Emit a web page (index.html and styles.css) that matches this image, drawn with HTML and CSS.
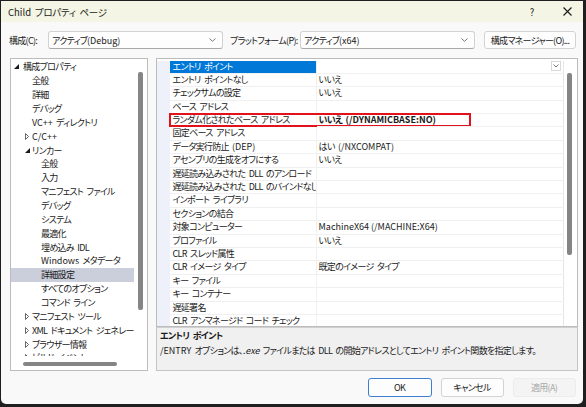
FILE: index.html
```html
<!DOCTYPE html>
<html lang="ja">
<head>
<meta charset="utf-8">
<title>Child プロパティ ページ</title>
<link rel="stylesheet" href="styles.css">
</head>
<body>
<div class="window">
  <div class="titlebar">
    <span class="title"><span class="lat">Child</span> プロパティ ページ</span>
    <span class="help">?</span>
    <span class="close"><svg width="9" height="9" viewBox="0 0 9 9"><path d="M0.5 0.5L8.5 8.5M8.5 0.5L0.5 8.5" stroke="#1a1a1a" stroke-width="1.1" fill="none"/></svg></span>
  </div>

  <div class="toolbar">
    <span class="lbl lbl1">構成(C):</span>
    <div class="combo"><span>アクティブ<span class="lat">(Debug)</span></span><svg class="chev" width="7" height="4" viewBox="0 0 7 4"><path d="M0.5 0.5L3.5 3.3L6.5 0.5" stroke="#777" fill="none"/></svg></div>
    <span class="lbl lbl2">プラットフォーム(P):</span>
    <div class="combo"><span>アクティブ<span class="lat">(x64)</span></span><svg class="chev" width="7" height="4" viewBox="0 0 7 4"><path d="M0.5 0.5L3.5 3.3L6.5 0.5" stroke="#777" fill="none"/></svg></div>
    <button class="btn mgr">構成マネージャー(O)...</button>
  </div>

  <div class="main">
    <div class="tree-panel">
      <div class="tree">
        <div class="item l0"><span class="tg"><svg width="5" height="5" viewBox="0 0 5 5"><polygon points="5,0 5,5 0,5" fill="#1a1a1a"/></svg></span>構成プロパティ</div>
        <div class="item l1"><span class="tg"></span>全般</div>
        <div class="item l1"><span class="tg"></span>詳細</div>
        <div class="item l1"><span class="tg"></span>デバッグ</div>
        <div class="item l1"><span class="tg"></span><span class="lat">VC++</span>&nbsp;ディレクトリ</div>
        <div class="item l1"><span class="tg"><svg class="col" width="4" height="7" viewBox="0 0 4 7"><polygon points="0.5,0.5 3.5,3.5 0.5,6.5" fill="none" stroke="#555" stroke-width="0.9"/></svg></span><span class="lat">C/C++</span></div>
        <div class="item l1"><span class="tg"><svg class="exp" width="5" height="5" viewBox="0 0 5 5"><polygon points="5,0 5,5 0,5" fill="#1a1a1a"/></svg></span>リンカー</div>
        <div class="item l2"><span class="tg"></span>全般</div>
        <div class="item l2"><span class="tg"></span>入力</div>
        <div class="item l2"><span class="tg"></span>マニフェスト ファイル</div>
        <div class="item l2"><span class="tg"></span>デバッグ</div>
        <div class="item l2"><span class="tg"></span>システム</div>
        <div class="item l2"><span class="tg"></span>最適化</div>
        <div class="item l2"><span class="tg"></span>埋め込み IDL</div>
        <div class="item l2"><span class="tg"></span><span class="lat">Windows</span>&nbsp;メタデータ</div>
        <div class="item l2 sel"><span class="tg"></span>詳細設定</div>
        <div class="item l2"><span class="tg"></span>すべてのオプション</div>
        <div class="item l2"><span class="tg"></span>コマンド ライン</div>
        <div class="item l1"><span class="tg"><svg class="col" width="4" height="7" viewBox="0 0 4 7"><polygon points="0.5,0.5 3.5,3.5 0.5,6.5" fill="none" stroke="#555" stroke-width="0.9"/></svg></span>マニフェスト ツール</div>
        <div class="item l1"><span class="tg"><svg class="col" width="4" height="7" viewBox="0 0 4 7"><polygon points="0.5,0.5 3.5,3.5 0.5,6.5" fill="none" stroke="#555" stroke-width="0.9"/></svg></span>XML ドキュメント ジェネレーター</div>
        <div class="item l1"><span class="tg"><svg class="col" width="4" height="7" viewBox="0 0 4 7"><polygon points="0.5,0.5 3.5,3.5 0.5,6.5" fill="none" stroke="#555" stroke-width="0.9"/></svg></span>ブラウザー情報</div>
        <div class="item l1"><span class="tg"><svg class="col" width="4" height="7" viewBox="0 0 4 7"><polygon points="0.5,0.5 3.5,3.5 0.5,6.5" fill="none" stroke="#555" stroke-width="0.9"/></svg></span>ビルド イベント</div>
      </div>
      <div class="vthumb"></div>
      <div class="hthumb"></div>
    </div>

    <div class="right">
      <div class="grid">
        <div class="rows">
          <div class="row"><span class="gut"></span><span class="name selcell">エントリ ポイント</span><span class="val"><span class="ddbtn"><svg width="6" height="4" viewBox="0 0 6 4"><path d="M0.5 0.5L3 3L5.5 0.5" stroke="#777" fill="none"/></svg></span></span></div>
          <div class="row"><span class="gut"></span><span class="name">エントリ ポイントなし</span><span class="val">いいえ</span></div>
          <div class="row"><span class="gut"></span><span class="name">チェックサムの設定</span><span class="val">いいえ</span></div>
          <div class="row"><span class="gut"></span><span class="name">ベース アドレス</span><span class="val"></span></div>
          <div class="row"><span class="gut"></span><span class="name hl">ランダム化されたベース アドレス<span class="redbox"></span></span><span class="val bold">いいえ <span class="lat">(/DYNAMICBASE:NO)</span></span></div>
          <div class="row"><span class="gut"></span><span class="name">固定ベース アドレス</span><span class="val"></span></div>
          <div class="row"><span class="gut"></span><span class="name">データ実行防止 <span class="lat">(DEP)</span></span><span class="val">はい <span class="lat">(/NXCOMPAT)</span></span></div>
          <div class="row"><span class="gut"></span><span class="name">アセンブリの生成をオフにする</span><span class="val">いいえ</span></div>
          <div class="row"><span class="gut"></span><span class="name">遅延読み込みされた DLL のアンロード</span><span class="val"></span></div>
          <div class="row"><span class="gut"></span><span class="name">遅延読み込みされた DLL のバインドなし</span><span class="val"></span></div>
          <div class="row"><span class="gut"></span><span class="name">インポート ライブラリ</span><span class="val"></span></div>
          <div class="row"><span class="gut"></span><span class="name">セクションの結合</span><span class="val"></span></div>
          <div class="row"><span class="gut"></span><span class="name">対象コンピューター</span><span class="val lat">MachineX64 (/MACHINE:X64)</span></div>
          <div class="row"><span class="gut"></span><span class="name">プロファイル</span><span class="val">いいえ</span></div>
          <div class="row"><span class="gut"></span><span class="name">CLR スレッド属性</span><span class="val"></span></div>
          <div class="row"><span class="gut"></span><span class="name">CLR イメージ タイプ</span><span class="val">既定のイメージ タイプ</span></div>
          <div class="row"><span class="gut"></span><span class="name">キー ファイル</span><span class="val"></span></div>
          <div class="row"><span class="gut"></span><span class="name">キー コンテナー</span><span class="val"></span></div>
          <div class="row"><span class="gut"></span><span class="name">遅延署名</span><span class="val"></span></div>
          <div class="row"><span class="gut"></span><span class="name">CLR アンマネージド コード チェック</span><span class="val"></span></div>
        </div>
        <div class="gthumb"></div>
      </div>
      <div class="desc">
        <div class="dtitle">エントリ ポイント</div>
        <div class="dtext"><span class="lat">/ENTRY</span> オプションは、<i class="lat">.exe</i> ファイルまたは DLL の開始アドレスとしてエントリ ポイント関数を指定します。</div>
      </div>
    </div>
  </div>

  <div class="footer">
    <button class="btn ok">OK</button>
    <button class="btn cancel">キャンセル</button>
    <button class="btn apply" disabled>適用(A)</button>
  </div>
</div>
</body>
</html>
```

FILE: styles.css
```css
* { box-sizing: border-box; }
html, body { margin: 0; padding: 0; }
body {
  width: 586px;
  height: 407px;
  overflow: hidden;
  background: #1f1f1f;
  font-family: "Noto Sans CJK JP", "Noto Sans", sans-serif;
  font-size: 9px;
  color: #1a1a1a;
  letter-spacing: -0.7px;
  word-spacing: 2px;
  font-feature-settings: "palt" 1;
}
.lat { letter-spacing: 0; word-spacing: 0; }
.window {
  margin: 1px 0 0 1px;
  width: 582px;
  height: 403px;
  background: #f9f9f9;
  border-radius: 0 0 5px 5px;
  display: flex;
  flex-direction: column;
  overflow: hidden;
}
.titlebar {
  flex: none;
  height: 21px;
  background: #f4f5e4;
  display: flex;
  align-items: center;
  padding-left: 7px;
}
.title { flex: 1; font-size: 9.5px; letter-spacing: -0.3px; }
.help { width: 12px; text-align: center; margin-right: 23px; font-size: 9.5px; letter-spacing: 0; }
.close { width: 12px; margin-right: 10px; display: flex; justify-content: center; }

.toolbar {
  flex: none;
  margin-top: 9px;
  height: 18px;
  display: flex;
  align-items: center;
  padding-left: 8px;
}
.lbl { white-space: nowrap; }
.lbl1 { width: 39px; }
.lbl2 { width: 70px; margin-left: 7px; }
.combo {
  width: 175px;
  height: 18px;
  border: 1px solid #d2d2d2;
  border-bottom-color: #a9a9a9;
  border-radius: 3px;
  background: #fefefe;
  display: flex;
  align-items: center;
  justify-content: space-between;
  padding: 0 6px 0 3px;
}
.btn {
  font-family: inherit;
  font-size: 9px;
  letter-spacing: inherit;
  word-spacing: inherit;
  color: #1a1a1a;
  border: 1px solid #d3d3d3;
  border-radius: 3px;
  background: #fdfdfd;
  padding: 0;
  height: 19px;
  font-feature-settings: "palt" 1;
}
.mgr { width: 92px; height: 18px; margin-left: 9px; }

.main {
  flex: none;
  margin-top: 9px;
  height: 313px;
  display: flex;
  padding-left: 9px;
  gap: 8px;
}
.tree-panel {
  width: 138px;
  height: 313px;
  border: 1px solid #bcbcbc;
  background: #fff;
  position: relative;
}
.tree {
  width: 123px;
  height: 297px;
  overflow: hidden;
  padding-top: 1px;
}
.item {
  height: 13.87px;
  display: flex;
  align-items: center;
  white-space: nowrap;
}
.item.l0 { padding-left: 3px; }
.item.l1 { padding-left: 12px; }
.item.l2 { padding-left: 21px; }
.item.sel { background: #cbcedb; }
.tg { flex: none; width: 9px; display: flex; align-items: center; }
.tg .col, .tg .exp { margin-left: 2px; }
.vthumb {
  position: absolute;
  left: 127px;
  top: 13px;
  width: 5px;
  height: 238px;
  background: #858585;
  border-radius: 2px;
}
.hthumb {
  position: absolute;
  left: 12px;
  top: 303px;
  width: 94px;
  height: 4px;
  background: #858585;
  border-radius: 2px;
}

.right {
  width: 422px;
  height: 313px;
  display: flex;
  flex-direction: column;
}
.grid {
  height: 269px;
  border: 1px solid #bcbcbc;
  background: #fff;
  position: relative;
  overflow: hidden;
}
.rows { width: 407px; padding-top: 1.5px; }
.row {
  display: grid;
  grid-template-columns: 13px 147px 247px;
  height: 13.4px;
}
.gut { background: #eef1f9; }
.name, .val {
  line-height: 12.4px;
  border-bottom: 1px solid #f0f0f0;
  white-space: nowrap;
  overflow: hidden;
}
.name { padding-left: 2.5px; border-right: 1px solid #f0f0f0; }
.name.hl { overflow: visible; position: relative; }
.val { padding-left: 1.5px; border-right: 1px solid #e6e6e6; position: relative; }
.bold { font-weight: bold; }
.selcell { background: #0078d7; color: #fff; }
.redbox {
  position: absolute;
  left: -1px;
  top: -1px;
  width: 302px;
  height: 14px;
  border: 2px solid #e3111d;
}
.ddbtn {
  position: absolute;
  right: 2px;
  top: 0.5px;
  width: 10px;
  height: 10px;
  border: 1px solid #d9d9d9;
  background: #fff;
  display: flex;
  align-items: center;
  justify-content: center;
}
.gthumb {
  position: absolute;
  left: 410px;
  top: 14px;
  width: 5px;
  height: 182px;
  background: #858585;
  border-radius: 2px;
}
.desc {
  height: 44px;
  border: 1px solid #c4c4c4;
  border-top-color: #d0d0d0;
  background: #f0f0f0;
  padding: 1px 0 0 3px;
}
.dtitle { font-weight: bold; line-height: 14px; }
.dtext { line-height: 15px; white-space: nowrap; }

.footer {
  flex: none;
  margin-top: 7px;
  height: 19px;
  display: flex;
  justify-content: flex-end;
  gap: 9px;
  padding-right: 7.5px;
}
.ok { width: 64px; border-color: #3a7fd0; }
.cancel { width: 63px; }
.apply { width: 63px; background: #f4f4f4; border-color: #ececec; color: #a8a8a8; }
```
